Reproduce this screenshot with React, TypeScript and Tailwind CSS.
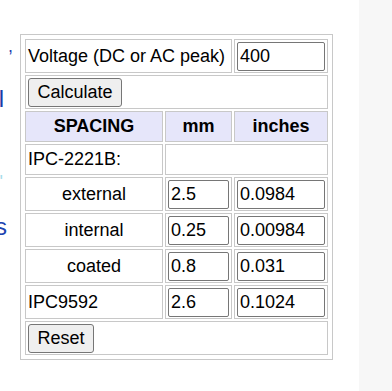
import type { ReactNode } from 'react'

const rows = [
  { label: 'external', mm: '2.5', inches: '0.0984', indent: true },
  { label: 'internal', mm: '0.25', inches: '0.00984', indent: true },
  { label: 'coated', mm: '0.8', inches: '0.031', indent: true },
  { label: 'IPC9592', mm: '2.6', inches: '0.1024', indent: false },
]

function Cell({ children, className = '' }: { children?: ReactNode; className?: string }) {
  return <div className={`border border-[#c8c8c8] flex items-center ${className}`}>{children}</div>
}

function Field({ value, width }: { value: string; width: string }) {
  return (
    <input
      readOnly
      value={value}
      className={`${width} h-[29px] border border-[#767676] rounded-[2px] px-[2px] text-[18px] text-black bg-white outline-none`}
    />
  )
}

function Btn({ label, width }: { label: string; width: string }) {
  return (
    <button className={`${width} h-[29px] border border-[#767676] rounded-[3px] bg-[#efefef] text-[18px] text-black`}>
      {label}
    </button>
  )
}

export default function App() {
  return (
    <div className="flex w-[392px] h-[391px] bg-white overflow-hidden" style={{ fontFamily: '"Liberation Sans", Arial, sans-serif' }}>
      {/* clipped text from the column on the left */}
      <div className="w-[20px] shrink-0 flex flex-col overflow-hidden">
        <div className="mt-[36px] h-[20px] leading-[20px] text-[18px] text-[#1f3fb0] flex justify-end whitespace-nowrap mr-[7px]">,</div>
        <div className="mt-[29px] h-[28px] leading-[28px] text-[24px] text-[#1a3aa8] flex justify-end whitespace-nowrap mr-[16px]">l</div>
        <div className="mt-[59px] h-[20px] leading-[20px] text-[18px] text-[#a6dcea] flex justify-end whitespace-nowrap mr-[17px]">'</div>
        <div className="mt-[21px] h-[28px] leading-[28px] text-[24px] text-[#2043b0] flex justify-end whitespace-nowrap mr-[13px]">s</div>
      </div>

      {/* calculator */}
      <div className="mt-[34px] self-start w-[313px] border border-[#c8c8c8] p-[2px] text-[18px] text-black">
        <div className="grid grid-cols-[138px_67px_94px] gap-[2px] p-[2px]">
          <Cell className="col-span-2 h-[34px] pl-[2px]">Voltage (DC or AC peak)</Cell>
          <Cell className="h-[34px] pl-[2px]"><Field value="400" width="w-[88px]" /></Cell>

          <Cell className="col-span-3 h-[34px] pl-[2px]"><Btn label="Calculate" width="w-[94px]" /></Cell>

          <Cell className="h-[31px] justify-center bg-[#e6e6fa] font-bold">SPACING</Cell>
          <Cell className="h-[31px] justify-center bg-[#e6e6fa] font-bold">mm</Cell>
          <Cell className="h-[31px] justify-center bg-[#e6e6fa] font-bold">inches</Cell>

          <Cell className="h-[31px] pl-[2px]">IPC-2221B:</Cell>
          <Cell className="col-span-2 h-[31px]" />

          {rows.map(r => (
            <div key={r.label} className="contents">
              <Cell className={`h-[34px] ${r.indent ? 'justify-center' : 'pl-[2px]'}`}>{r.label}</Cell>
              <Cell className="h-[34px] pl-[2px]"><Field value={r.mm} width="w-[61px]" /></Cell>
              <Cell className="h-[34px] pl-[2px]"><Field value={r.inches} width="w-[88px]" /></Cell>
            </div>
          ))}

          <Cell className="col-span-3 h-[34px] pl-[2px]"><Btn label="Reset" width="w-[66px]" /></Cell>
        </div>
      </div>

      <div className="w-[26px] shrink-0" />
      <div className="flex-1 bg-[#f7f7f7]" />
    </div>
  )
}
